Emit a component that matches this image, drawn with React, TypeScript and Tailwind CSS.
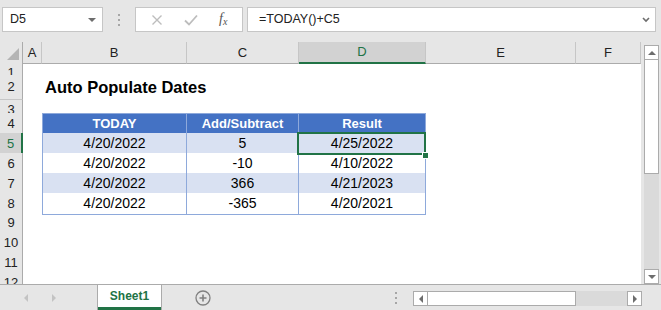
import React from "react";

const cols = "grid grid-cols-[23px_19px_145px_112px_127px_150px_65px]";
const font = "font-['Liberation_Sans',Arial,sans-serif]";

type TableRow = { a: string; b: string; c: string; band: boolean };

const tableRows: TableRow[] = [
  { a: "4/20/2022", b: "5", c: "4/25/2022", band: true },
  { a: "4/20/2022", b: "-10", c: "4/10/2022", band: false },
  { a: "4/20/2022", b: "366", c: "4/21/2023", band: true },
  { a: "4/20/2022", b: "-365", c: "4/20/2021", band: false },
];

function RowHead({ n, active }: { n: number; active?: boolean }) {
  return (
    <div
      className={
        active
          ? "flex items-center justify-center bg-[#d2d2d2] text-[#217346] border-r-2 border-r-[#217346] border-b border-b-[#c6c6c6] text-[13px]"
          : "flex items-center justify-center bg-[#e6e6e6] text-[#222] border-r border-r-[#ababab] border-b border-b-[#c6c6c6] text-[13px]"
      }
    >
      {n}
    </div>
  );
}

function ColHead({ label, active }: { label: string; active?: boolean }) {
  return (
    <div
      className={
        active
          ? "flex items-center justify-center bg-[#d2d2d2] text-[#217346] border-r border-r-[#c6c6c6] border-b-2 border-b-[#217346] text-[13px]"
          : "flex items-center justify-center bg-[#e6e6e6] text-[#222] border-r border-r-[#c6c6c6] border-b border-b-[#ababab] text-[13px]"
      }
    >
      {label}
    </div>
  );
}

function EmptyRow({ n, h }: { n: number; h: string }) {
  return (
    <div className={`${cols} ${h}`}>
      <RowHead n={n} />
    </div>
  );
}

function Triangle({ dir, color }: { dir: "up" | "down" | "left" | "right"; color: string }) {
  const pts = {
    up: "0,5 8,5 4,1",
    down: "0,1 8,1 4,5",
    left: "5,0 5,8 1,4",
    right: "1,0 1,8 5,4",
  }[dir];
  const vb = dir === "up" || dir === "down" ? "0 0 8 6" : "0 0 6 8";
  const size = dir === "up" || dir === "down" ? "w-[8px] h-[6px]" : "w-[6px] h-[8px]";
  return (
    <svg viewBox={vb} className={size}>
      <polygon points={pts} fill={color} />
    </svg>
  );
}

function Dots() {
  return (
    <div className="flex flex-col gap-[3px]">
      <div className="w-[2px] h-[2px] bg-[#a6a6a6]" />
      <div className="w-[2px] h-[2px] bg-[#a6a6a6]" />
      <div className="w-[2px] h-[2px] bg-[#a6a6a6]" />
    </div>
  );
}

export default function App() {
  return (
    <div className={`w-[661px] h-[310px] bg-[#e6e6e6] flex flex-col overflow-hidden ${font}`}>
      {/* formula bar */}
      <div className="h-[42px] flex items-start pt-[7px] pl-[2px]">
        <div className="w-[101px] h-[25px] bg-white border border-[#c6c6c6] flex items-center justify-between pl-[7px] pr-[6px] text-[12.5px] text-[#222]">
          <span>D5</span>
          <Triangle dir="down" color="#6d6d6d" />
        </div>
        <div className="w-[32px] h-[25px] flex items-center justify-center">
          <Dots />
        </div>
        <div className="w-[108px] h-[25px] bg-white border border-[#c6c6c6] flex items-center justify-around px-[4px]">
          <svg viewBox="0 0 12 12" className="w-[12px] h-[12px]">
            <path d="M1.5 1.5 L10.5 10.5 M10.5 1.5 L1.5 10.5" stroke="#bdbdbd" strokeWidth="1.4" fill="none" />
          </svg>
          <svg viewBox="0 0 14 12" className="w-[14px] h-[12px]">
            <path d="M1 6.5 L5 10.5 L13 1.5" stroke="#bdbdbd" strokeWidth="1.8" fill="none" />
          </svg>
          <span className="font-['Liberation_Serif',serif] italic text-[14px] text-[#555] leading-none">
            f<span className="text-[10px] align-[-2px]">x</span>
          </span>
        </div>
        <div className="ml-[4px] w-[409px] h-[25px] bg-white border border-[#c6c6c6] flex items-center justify-between pl-[11px] pr-[5px] text-[12.5px] text-[#222]">
          <span>=TODAY()+C5</span>
          <svg viewBox="0 0 8 6" className="w-[8px] h-[6px]">
            <path d="M1 1 L4 4 L7 1" stroke="#6d6d6d" strokeWidth="1.6" fill="none" />
          </svg>
        </div>
      </div>

      {/* sheet */}
      <div className="flex h-[242px]">
        <div className="w-[641px] bg-white overflow-hidden">
          <div className={`${cols} h-[21px]`}>
            <div className="flex items-end justify-end bg-[#e6e6e6] border-r border-r-[#ababab] border-b border-b-[#ababab] pr-[3px] pb-[3px]">
              <svg viewBox="0 0 12 12" className="w-[12px] h-[12px]">
                <polygon points="12,0 12,12 0,12" fill="#b4b4b4" />
              </svg>
            </div>
            <ColHead label="A" />
            <ColHead label="B" />
            <ColHead label="C" />
            <ColHead label="D" active />
            <ColHead label="E" />
            <ColHead label="F" />
          </div>

          <EmptyRow n={1} h="h-[12px]" />
          <div className={`${cols} h-[25px]`}>
            <RowHead n={2} />
            <div />
            <div className="col-span-5 flex items-center pl-[3px] text-[16.5px] font-bold text-black whitespace-nowrap">
              Auto Populate Dates
            </div>
          </div>
          <EmptyRow n={3} h="h-[13px]" />

          {/* table header */}
          <div className={`${cols} h-[20px]`}>
            <RowHead n={4} />
            <div />
            <div className="flex items-center justify-center bg-[#4472c4] text-white font-bold text-[13px] border border-[#8ea9db]">
              TODAY
            </div>
            <div className="flex items-center justify-center bg-[#4472c4] text-white font-bold text-[13px] border-y border-r border-[#8ea9db]">
              Add/Subtract
            </div>
            <div className="flex items-center justify-center bg-[#4472c4] text-white font-bold text-[13px] border-y border-r border-[#8ea9db]">
              Result
            </div>
          </div>

          {tableRows.map((r, i) => {
            const bg = r.band ? "bg-[#d9e1f2]" : "bg-white";
            return (
              <div key={i} className={`${cols} h-[20px]`}>
                <RowHead n={5 + i} active={i === 0} />
                <div />
                <div className={`flex items-center justify-center ${bg} text-black text-[14px] border-l border-r border-b border-[#8ea9db]`}>
                  {r.a}
                </div>
                <div className={`flex items-center justify-center ${bg} text-black text-[14px] border-r border-b border-[#8ea9db]`}>
                  {r.b}
                </div>
                <div className={`relative flex items-center justify-center ${bg} text-black text-[14px] border-r border-b border-[#8ea9db] ${i === 0 ? "z-10" : ""}`}>
                  {r.c}
                  {i === 0 && (
                    <>
                      <div className="absolute left-[-2px] right-[-1px] top-[-1px] bottom-[-1px] border-2 border-[#217346]" />
                      <div className="absolute right-[-4px] bottom-[-5px] w-[7px] h-[7px] bg-[#217346] border border-white" />
                    </>
                  )}
                </div>
              </div>
            );
          })}

          <EmptyRow n={9} h="h-[20px]" />
          <EmptyRow n={10} h="h-[20px]" />
          <EmptyRow n={11} h="h-[20px]" />
          <EmptyRow n={12} h="h-[20px]" />
        </div>

        {/* vertical scrollbar */}
        <div className="ml-[3px] mt-[3px] w-[15px] flex flex-col">
          <div className="h-[15px] bg-white border border-[#ababab] flex items-center justify-center">
            <Triangle dir="up" color="#6d6d6d" />
          </div>
          <div className="h-[114px] bg-white border-x border-b border-[#ababab]" />
          <div className="flex-1 bg-[#dadada]" />
          <div className="h-[15px] bg-white border border-[#ababab] flex items-center justify-center">
            <Triangle dir="down" color="#6d6d6d" />
          </div>
        </div>
      </div>

      {/* sheet tabs */}
      <div className="flex-1 flex items-start border-t border-[#ababab]">
        <div className="w-[97px] h-full flex items-center justify-start gap-[22px] pl-[23px]">
          <Triangle dir="left" color="#c3c3c3" />
          <Triangle dir="right" color="#c3c3c3" />
        </div>
        <div className="w-[65px] h-full bg-white border-x border-[#ababab] flex flex-col">
          <div className="flex-1 flex items-center justify-center text-[12px] font-bold text-[#217346]">Sheet1</div>
          <div className="h-[3px] bg-[#217346]" />
        </div>
        <div className="w-[82px] h-full flex items-center justify-center">
          <svg viewBox="0 0 16 16" className="w-[16px] h-[16px]">
            <circle cx="8" cy="8" r="7" stroke="#808080" strokeWidth="1.3" fill="none" />
            <path d="M8 4.5 V11.5 M4.5 8 H11.5" stroke="#808080" strokeWidth="1.6" />
          </svg>
        </div>
        <div className="w-[169px] h-full flex items-center justify-end pr-[16px]">
          <Dots />
        </div>
        <div className="mt-[6px] w-[229px] h-[15px] flex">
          <div className="w-[15px] h-full bg-white border border-[#ababab] flex items-center justify-center">
            <Triangle dir="left" color="#6d6d6d" />
          </div>
          <div className="w-[148px] h-full bg-white border-y border-r border-[#ababab]" />
          <div className="flex-1 h-full bg-[#dadada]" />
          <div className="w-[15px] h-full bg-white border border-[#ababab] flex items-center justify-center">
            <Triangle dir="right" color="#6d6d6d" />
          </div>
        </div>
      </div>
    </div>
  );
}
